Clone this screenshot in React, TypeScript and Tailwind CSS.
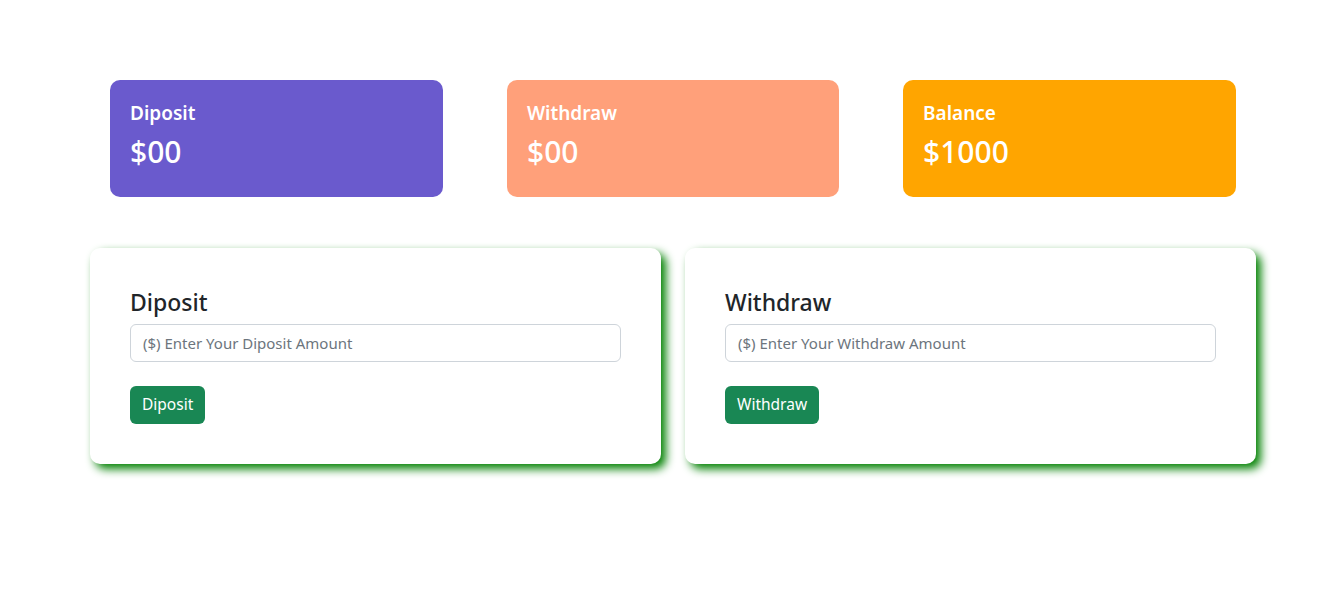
import React from "react";

const font = { fontFamily: '"Noto Sans", "Open Sans", sans-serif' };

function Stat({ title, value, bg, w }: { title: string; value: string; bg: string; w: string }) {
  return (
    <div className={`${w} rounded-[10px] px-5 pt-5 pb-[19px] text-white ${bg}`}>
      <h5 className="mb-2 pt-[1px] text-[19px] font-semibold leading-[24px]">{title}</h5>
      <h2 className="mb-2 text-[30px] font-medium leading-[37px]">{value}</h2>
    </div>
  );
}

function Panel({ title, placeholder, btn }: { title: string; placeholder: string; btn: string }) {
  return (
    <div className="w-[571px] rounded-[10px] bg-white p-10 shadow-[5px_5px_10px_#008000]">
      <h4 className="mb-2 text-[23px] font-medium leading-[28px] text-[#212529]">{title}</h4>
      <input
        className="mb-6 block h-[38px] w-full rounded-[6px] border border-[#ced4da] px-3 text-[15px] text-[#212529] placeholder:text-[#6c757d] outline-none"
        placeholder={placeholder}
        style={font}
      />
      <button className="h-[38px] rounded-[6px] bg-[#198754] px-3 text-[15.5px] text-white" style={font}>
        {btn}
      </button>
    </div>
  );
}

export default function App() {
  return (
    <div className="min-h-[595px] w-full bg-white pt-20" style={font}>
      <div className="flex gap-[64px] pl-[110px]">
        <Stat title="Diposit" value="$00" bg="bg-[#6a5acd]" w="w-[333px]" />
        <Stat title="Withdraw" value="$00" bg="bg-[#ffa07a]" w="w-[332px]" />
        <Stat title="Balance" value="$1000" bg="bg-[#ffa500]" w="w-[333px]" />
      </div>
      <div className="mt-[51px] flex gap-6 pl-[90px]">
        <Panel title="Diposit" placeholder="($) Enter Your Diposit Amount" btn="Diposit" />
        <Panel title="Withdraw" placeholder="($) Enter Your Withdraw Amount" btn="Withdraw" />
      </div>
    </div>
  );
}
